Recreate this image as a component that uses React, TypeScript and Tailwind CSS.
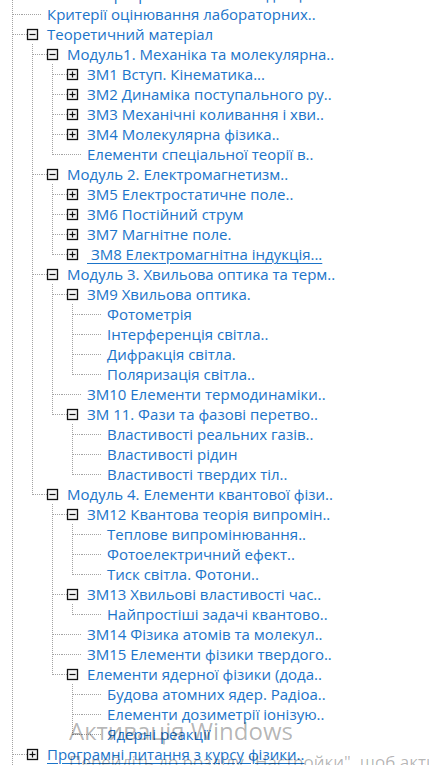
import React from 'react';

type TreeNode = { t: string; c?: TreeNode[]; u?: boolean };

const tree: TreeNode[] = [
  { t: 'Робоча програма навчальної дисц..' },
  { t: 'Критерії оцінювання лабораторних..' },
  {
    t: 'Теоретичний матеріал',
    c: [
      {
        t: 'Модуль1. Механіка та молекулярна..',
        c: [
          { t: 'ЗМ1 Вступ. Кінематика...', c: [] },
          { t: 'ЗМ2 Динаміка поступального ру..', c: [] },
          { t: 'ЗМ3 Механічні коливання і хви..', c: [] },
          { t: 'ЗМ4 Молекулярна фізика..', c: [] },
          { t: 'Елементи спеціальної теорії в..' },
        ],
      },
      {
        t: 'Модуль 2. Електромагнетизм..',
        c: [
          { t: 'ЗМ5 Електростатичне поле..', c: [] },
          { t: 'ЗМ6 Постійний струм', c: [] },
          { t: 'ЗМ7 Магнітне поле.', c: [] },
          { t: '\u00a0ЗМ8 Електромагнітна індукція...', c: [], u: true },
        ],
      },
      {
        t: 'Модуль 3. Хвильова оптика та терм..',
        c: [
          {
            t: 'ЗМ9 Хвильова оптика.',
            c: [
              { t: 'Фотометрія' },
              { t: 'Інтерференція світла..' },
              { t: 'Дифракція світла.' },
              { t: 'Поляризація світла..' },
            ],
          },
          { t: 'ЗМ10 Елементи термодинаміки..' },
          {
            t: 'ЗМ 11. Фази та фазові перетво..',
            c: [
              { t: 'Властивості реальних газів..' },
              { t: 'Властивості рідин' },
              { t: 'Властивості твердих тіл..' },
            ],
          },
        ],
      },
      {
        t: 'Модуль 4. Елементи квантової фізи..',
        c: [
          {
            t: 'ЗМ12 Квантова теорія випромін..',
            c: [
              { t: 'Теплове випромінювання..' },
              { t: 'Фотоелектричний ефект..' },
              { t: 'Тиск світла. Фотони..' },
            ],
          },
          {
            t: 'ЗМ13 Хвильові властивості час..',
            c: [{ t: 'Найпростіші задачі квантово..' }],
          },
          { t: 'ЗМ14 Фізика атомів та молекул..' },
          { t: 'ЗМ15 Елементи фізики твердого..' },
          {
            t: 'Елементи ядерної фізики (дода..',
            c: [
              { t: 'Будова атомних ядер. Радіоа..' },
              { t: 'Елементи дозиметрії іонізую..' },
              { t: 'Ядерні реакції' },
            ],
          },
        ],
      },
    ],
  },
  { t: 'Програмні питання з курсу фізики..', c: [], u: true },
  { t: 'Список літератури' },
];

const DOT = '#a3a3a3';

function LineCell({ kind }: { kind: 'none' | 'line' | 'tee' | 'elbow' }) {
  return (
    <svg width="20" height="20" className="shrink-0 block">
      {(kind === 'line' || kind === 'tee') && (
        <line x1="10.5" y1="0" x2="10.5" y2="20" stroke={DOT} strokeDasharray="1 1" />
      )}
      {kind === 'elbow' && (
        <line x1="10.5" y1="0" x2="10.5" y2="11" stroke={DOT} strokeDasharray="1 1" />
      )}
      {(kind === 'tee' || kind === 'elbow') && (
        <line x1="11" y1="10.5" x2="20" y2="10.5" stroke={DOT} strokeDasharray="1 1" />
      )}
    </svg>
  );
}

function ToggleCell({ node }: { node: TreeNode }) {
  const hasBox = !!node.c;
  const open = !!node.c && node.c.length > 0;
  return (
    <svg width="20" height="20" className="shrink-0 block">
      {hasBox ? (
        <>
          <line x1="0" y1="10.5" x2="5" y2="10.5" stroke={DOT} strokeDasharray="1 1" />
          <rect x="5.5" y="5.5" width="10" height="10" fill="#f4f4f4" stroke="#111" strokeWidth="1.3" />
          <line x1="7.5" y1="10.5" x2="13.5" y2="10.5" stroke="#111" strokeWidth="1.2" />
          {!open && <line x1="10.5" y1="7.5" x2="10.5" y2="13.5" stroke="#111" strokeWidth="1.2" />}
        </>
      ) : (
        <line x1="0" y1="10.5" x2="21" y2="10.5" stroke={DOT} strokeDasharray="1 1" />
      )}
    </svg>
  );
}

function renderRows(nodes: TreeNode[], trail: boolean[], out: React.ReactNode[]) {
  nodes.forEach((n, i) => {
    const last = i === nodes.length - 1 && trail.length > 0;
    out.push(
      <div key={out.length} className="flex h-5 items-center">
        {trail.map((more, k) => (
          <LineCell key={k} kind={more ? 'line' : 'none'} />
        ))}
        <LineCell kind={last ? 'elbow' : 'tee'} />
        <ToggleCell node={n} />
        <span
          className={`pl-[5px] whitespace-nowrap text-[15px] leading-5 text-[#1b74c9] ${
            n.u ? 'underline underline-offset-[3px]' : ''
          }`}
        >
          {n.t}
        </span>
      </div>
    );
    if (n.c && n.c.length > 0) renderRows(n.c, [...trail, !last], out);
  });
}

export default function App() {
  const rows: React.ReactNode[] = [];
  renderRows(tree, [], rows);

  return (
    <div
      className="relative w-[429px] h-[765px] overflow-hidden bg-white"
      style={{ fontFamily: '"Open Sans", "Noto Sans", sans-serif' }}
    >
      <div className="-mt-4 pl-[2px]">{rows}</div>

      {/* Windows activation watermark */}
      <div className="absolute left-[69px] top-[716px] pointer-events-none whitespace-nowrap">
        <div className="text-[24px] leading-[30px] text-black/30">Активація Windows</div>
        <div className="text-[17px] leading-5 text-black/30 mt-[6px]">
          Перейдіть до розділу "Настройки", щоб активувати Windows.
        </div>
      </div>
    </div>
  );
}
